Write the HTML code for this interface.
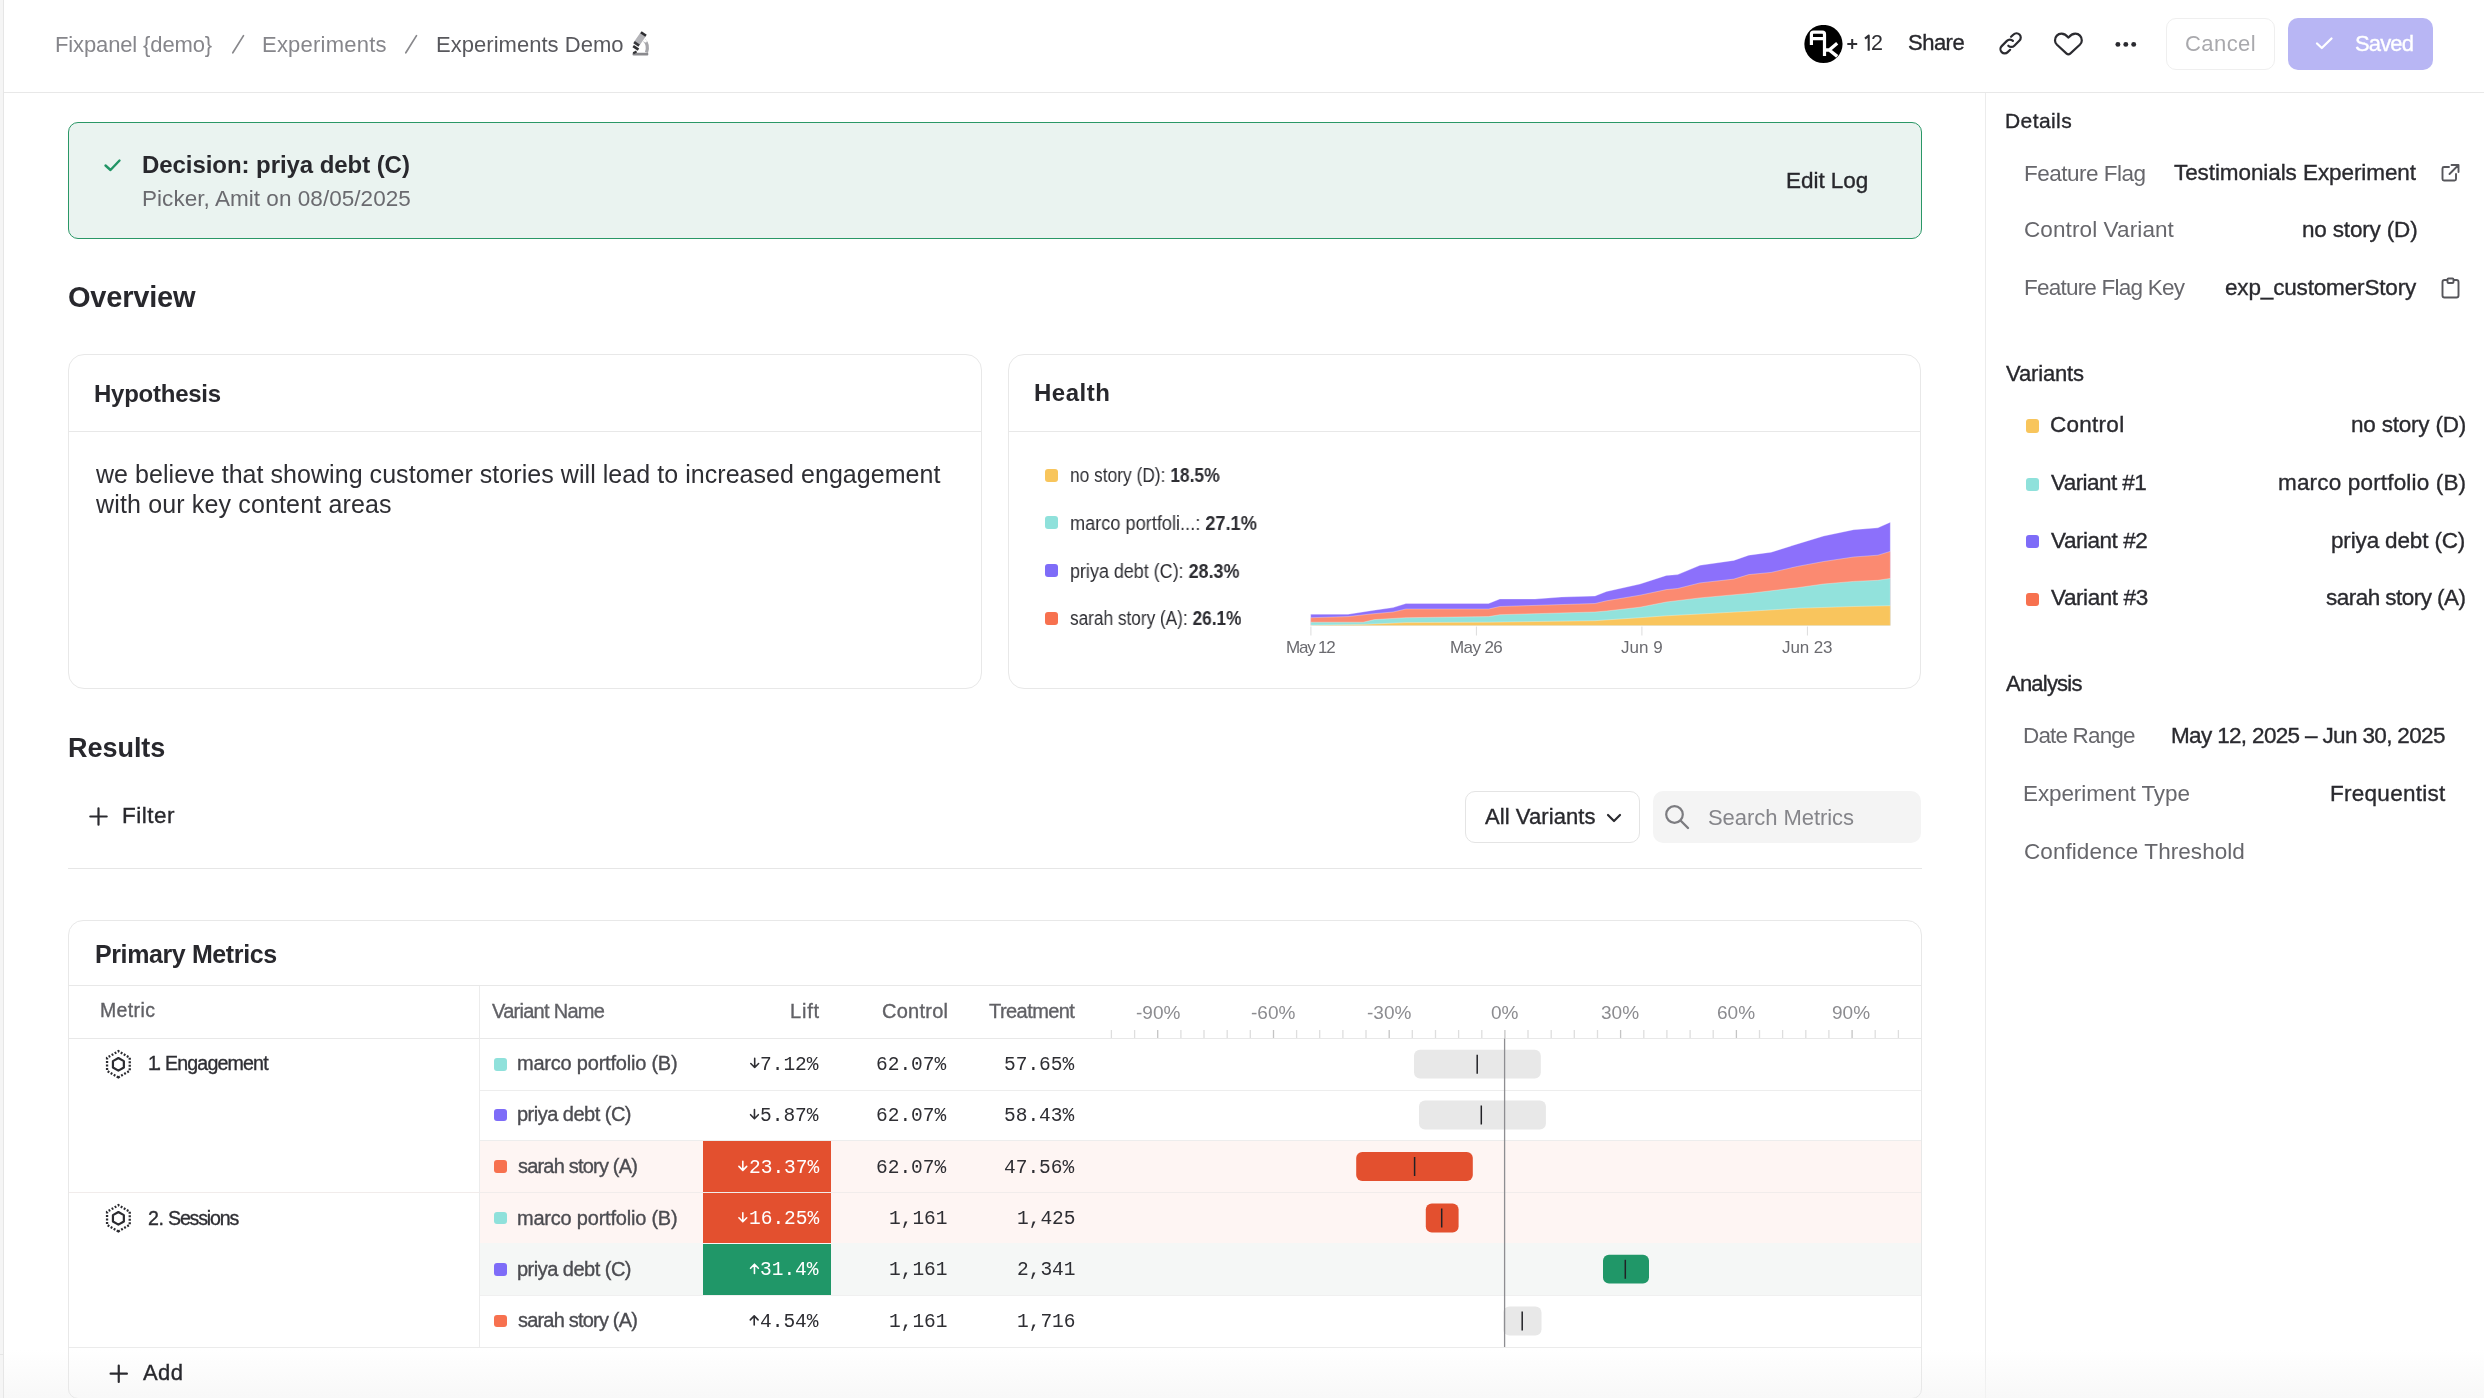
<!DOCTYPE html><html><head><meta charset="utf-8"><style>
html,body{margin:0;padding:0;background:#fff;width:2484px;height:1398px;overflow:hidden}
.t{position:absolute;white-space:pre;will-change:transform}
.b{position:absolute;display:block}
</style></head><body>
<div class="b" style="left:0px;top:0px;width:3px;height:1398px;background:#f5f5f5"></div>
<div class="b" style="left:3px;top:0px;width:1px;height:1398px;background:#e6e6e6"></div>
<div class="b" style="left:4px;top:92px;width:2480px;height:1px;background:#e8e8e8"></div>
<div class="b" style="left:1985px;top:93px;width:1px;height:1305px;background:#ececec"></div>
<div class="b" style="left:4px;top:1350px;width:2480px;height:48px;background:linear-gradient(rgba(250,250,250,0),rgba(245,245,245,0.7))"></div>
<div class="b" style="left:0px;top:1354px;width:3px;height:1px;background:#e6e6e6"></div>
<div class="t" style="left:55.25px;top:33.98px;font:400 22px/22px 'Liberation Sans', sans-serif;letter-spacing:-0.134px;color:#86868b;">Fixpanel {demo}</div>
<svg class="b" style="left:228px;top:32px" width="20" height="24" viewBox="0 0 20 24"><path d="M15.5 3.6 L4.8 20.8" stroke="#88888c" stroke-width="1.7" stroke-linecap="round"/></svg>
<div class="t" style="left:262.25px;top:33.98px;font:400 22px/22px 'Liberation Sans', sans-serif;letter-spacing:0.225px;color:#86868b;">Experiments</div>
<svg class="b" style="left:401px;top:32px" width="20" height="24" viewBox="0 0 20 24"><path d="M15.5 3.6 L4.8 20.8" stroke="#88888c" stroke-width="1.7" stroke-linecap="round"/></svg>
<div class="t" style="left:435.75px;top:33.98px;font:400 22px/22px 'Liberation Sans', sans-serif;letter-spacing:0.033px;color:#58585d;">Experiments Demo</div>
<svg class="b" style="left:1804px;top:24.9px" width="39" height="39" viewBox="0 0 39 39"><circle cx="19.45" cy="19" r="19.1" fill="#000"/><path d="M7.4 20.1 V9 Q7.4 7.1 9.5 7.1 H18.4 Q20.5 7.1 20.5 9.2 V31.1 M7.4 13.7 H20.5" fill="none" stroke="#fff" stroke-width="3.2"/><path d="M20.5 25 H25.2 L33.2 18.3 M25.2 25 L33.2 31.4" fill="none" stroke="#fff" stroke-width="3.3"/></svg>
<svg class="b" style="left:1846px;top:38px" width="13" height="12" viewBox="0 0 13 12"><path d="M6.2 1 V11 M1.3 6 H11.2" stroke="#2e2e33" stroke-width="2"/></svg>
<svg class="b" style="left:1862px;top:33px" width="10" height="20" viewBox="0 0 10 20"><path d="M6.7 17.8 V2.6 L3 5.6" fill="none" stroke="#2e2e33" stroke-width="2.1" stroke-linejoin="round"/></svg>
<div class="t" style="left:1870.83px;top:33.40px;font:400 21.5px/21.5px 'Liberation Sans', sans-serif;letter-spacing:0.000px;color:#2e2e33;">2</div>
<div class="t" style="left:1908.10px;top:32.43px;font:400 22px/22px 'Liberation Sans', sans-serif;letter-spacing:-0.512px;color:#28282d;-webkit-text-stroke:0.35px #28282d;">Share</div>
<svg class="b" style="left:1992px;top:26px" width="38" height="36" viewBox="0 0 38 36"><g fill="none" stroke="#2b2b30" stroke-width="2.2" stroke-linecap="round"><path d="M19.05 10.8 L21.5 8.5 A4.24 4.24 0 0 1 27.5 14.5 L22.3 19.7 A4.24 4.24 0 0 1 16.3 19.7"/><path d="M18.15 23.8 L15.7 26.1 A4.24 4.24 0 0 1 9.7 20.1 L14.9 14.9 A4.24 4.24 0 0 1 20.9 14.9"/></g></svg>
<svg class="b" style="left:2046px;top:26px" width="44" height="36" viewBox="0 0 44 36"><path d="M22.4 11.6 C20.5 9.3 18.3 7.7 15.4 7.7 C11.8 7.7 9 10.6 9 14.4 C9 16.3 9.8 17.6 11 18.8 L20.6 27.6 Q22.4 29.2 24.2 27.6 L33.8 18.8 C35 17.6 35.8 16.3 35.8 14.4 C35.8 10.6 33 7.7 29.4 7.7 C26.5 7.7 24.3 9.3 22.4 11.6 Z" fill="none" stroke="#2b2b30" stroke-width="2.2" stroke-linejoin="round"/></svg>
<svg class="b" style="left:2110px;top:38px" width="30" height="14" viewBox="0 0 30 14"><circle cx="7.9" cy="6.4" r="2.45" fill="#2b2b30"/><circle cx="15.8" cy="6.4" r="2.45" fill="#2b2b30"/><circle cx="23.7" cy="6.4" r="2.45" fill="#2b2b30"/></svg>
<div class="b" style="left:2165.5px;top:18px;width:109.5px;height:52px;border:1.5px solid #efefef;border-radius:10px;box-sizing:border-box"></div>
<div class="t" style="left:2184.57px;top:32.98px;font:400 22px/22px 'Liberation Sans', sans-serif;letter-spacing:0.425px;color:#a9a9ad;">Cancel</div>
<div class="b" style="left:2288px;top:18px;width:145px;height:52px;background:#b8b6f4;border-radius:10px"></div>
<svg class="b" style="left:2315px;top:36px" width="19" height="15" viewBox="0 0 19 15"><path d="M2 7.5 L6.8 12 L16.5 2.5" fill="none" stroke="#fff" stroke-width="2.3" stroke-linecap="round" stroke-linejoin="round"/></svg>
<div class="t" style="left:2355.00px;top:32.53px;font:400 22px/22px 'Liberation Sans', sans-serif;letter-spacing:-0.850px;color:#ffffff;-webkit-text-stroke:0.35px #ffffff;">Saved</div>
<svg class="b" style="left:624px;top:26px" width="36" height="36" viewBox="0 0 36 36"><rect x="12.8" y="6.8" width="6.6" height="12" rx="1.5" fill="#b3b3b7" transform="rotate(35 16 12.8)"/><rect x="13" y="5.6" width="6.2" height="2.6" fill="#2d2d31" transform="rotate(35 16 12.8)"/><rect x="13" y="17.6" width="6.2" height="2.6" fill="#38383c" transform="rotate(35 16 12.8)"/><path d="M20.5 14.5 Q25 19 22.5 26.5" stroke="#a6a6aa" stroke-width="3.2" fill="none"/><path d="M9.2 20.2 L14.5 23.6" stroke="#2e2e31" stroke-width="2.6"/><rect x="8.5" y="26.8" width="15.8" height="2.6" rx="1" fill="#8a8a8e"/><path d="M9.2 27.2 L12.6 25.6" stroke="#333336" stroke-width="2.2"/><circle cx="21.4" cy="14.9" r="1.5" fill="#fff"/></svg>
<div class="b" style="left:68px;top:122px;width:1854px;height:117px;background:#eaf3f0;border:1.5px solid #2a9766;border-radius:10px;box-sizing:border-box"></div>
<svg class="b" style="left:103px;top:157px" width="19" height="16" viewBox="0 0 19 16"><path d="M2.5 8.5 L7.5 13 L16.5 3.5" fill="none" stroke="#219465" stroke-width="2.4" stroke-linecap="round" stroke-linejoin="round"/></svg>
<div class="t" style="left:142.38px;top:152.98px;font:700 24px/24px 'Liberation Sans', sans-serif;letter-spacing:-0.065px;color:#28282d;">Decision: priya debt (C)</div>
<div class="t" style="left:142.12px;top:187.95px;font:400 22.5px/22.5px 'Liberation Sans', sans-serif;letter-spacing:0.045px;color:#6a6a6f;">Picker, Amit on 08/05/2025</div>
<div class="t" style="left:1786.12px;top:169.60px;font:400 22.5px/22.5px 'Liberation Sans', sans-serif;letter-spacing:-0.036px;color:#28282d;-webkit-text-stroke:0.35px #28282d;">Edit Log</div>
<div class="t" style="left:67.88px;top:283.05px;font:700 29px/29px 'Liberation Sans', sans-serif;letter-spacing:-0.196px;color:#28282d;">Overview</div>
<div class="b" style="left:68px;top:354px;width:914px;height:335px;border:1.5px solid #e8e8e8;border-radius:16px;box-sizing:border-box"></div>
<div class="b" style="left:69px;top:431px;width:912px;height:1px;background:#e8e8e8"></div>
<div class="t" style="left:94.17px;top:381.68px;font:700 24px/24px 'Liberation Sans', sans-serif;letter-spacing:-0.250px;color:#28282d;">Hypothesis</div>
<div class="t" style="left:96.30px;top:462.44px;font:400 25px/25px 'Liberation Sans', sans-serif;letter-spacing:0.051px;color:#2e2e33;">we believe that showing customer stories will lead to increased engagement</div>
<div class="t" style="left:96.30px;top:492.24px;font:400 25px/25px 'Liberation Sans', sans-serif;letter-spacing:0.148px;color:#2e2e33;">with our key content areas</div>
<div class="b" style="left:1008px;top:354px;width:913px;height:335px;border:1.5px solid #e8e8e8;border-radius:16px;box-sizing:border-box"></div>
<div class="b" style="left:1009px;top:431px;width:911px;height:1px;background:#e8e8e8"></div>
<div class="t" style="left:1033.88px;top:381.18px;font:700 24px/24px 'Liberation Sans', sans-serif;letter-spacing:0.525px;color:#28282d;">Health</div>
<div class="b" style="left:1045px;top:468.5px;width:13px;height:13.0px;background:#f8c55c;border-radius:3px"></div>
<div class="t" style="left:1069.8px;top:465.89px;font:400 19.5px/19.5px 'Liberation Sans';color:#2e2e33;transform-origin:0 0;transform:scaleX(0.8900)">no story (D): <b style="font-weight:700">18.5%</b></div>
<div class="b" style="left:1045px;top:516.3px;width:13px;height:13.0px;background:#8fe1db;border-radius:3px"></div>
<div class="t" style="left:1069.8px;top:513.69px;font:400 19.5px/19.5px 'Liberation Sans';color:#2e2e33;transform-origin:0 0;transform:scaleX(0.9317)">marco portfoli...: <b style="font-weight:700">27.1%</b></div>
<div class="b" style="left:1045px;top:564.2px;width:13px;height:13.0px;background:#7e6cf8;border-radius:3px"></div>
<div class="t" style="left:1069.8px;top:561.59px;font:400 19.5px/19.5px 'Liberation Sans';color:#2e2e33;transform-origin:0 0;transform:scaleX(0.9194)">priya debt (C): <b style="font-weight:700">28.3%</b></div>
<div class="b" style="left:1045px;top:612.1px;width:13px;height:13.0px;background:#f7714f;border-radius:3px"></div>
<div class="t" style="left:1069.8px;top:609.49px;font:400 19.5px/19.5px 'Liberation Sans';color:#2e2e33;transform-origin:0 0;transform:scaleX(0.8835)">sarah story (A): <b style="font-weight:700">26.1%</b></div>
<svg class="b" style="left:0;top:0" width="2484" height="700" viewBox="0 0 2484 700"><polygon points="1310.7,614.3 1348.0,614.3 1374.0,610.2 1393.0,607.6 1406.0,603.5 1488.6,603.5 1499.8,599.0 1535.0,599.0 1561.6,597.0 1595.0,596.0 1606.5,591.5 1640.0,584.0 1666.4,575.4 1677.7,574.6 1700.0,565.3 1733.8,560.4 1748.8,555.2 1771.2,552.2 1797.5,543.9 1823.7,536.0 1853.6,529.7 1877.9,527.8 1890.3,522.2 1890.3,625.6 1310.7,625.6" fill="#8c70fb" stroke="rgba(255,255,255,0.5)" stroke-width="0.6"/><polygon points="1310.7,617.7 1348.0,616.6 1370.6,614.0 1393.0,612.0 1406.0,609.0 1488.6,609.0 1499.8,606.5 1595.0,603.5 1606.5,600.8 1640.0,595.2 1666.4,589.6 1677.7,588.5 1700.0,582.9 1733.8,579.1 1748.8,574.6 1771.2,572.4 1797.5,566.4 1823.7,561.5 1853.6,557.0 1877.9,555.2 1890.3,551.4 1890.3,625.6 1310.7,625.6" fill="#fb8a71" stroke="rgba(255,255,255,0.5)" stroke-width="0.6"/><polygon points="1310.7,622.2 1363.2,622.2 1374.4,619.6 1406.0,617.7 1488.6,616.6 1499.8,614.7 1595.0,612.0 1606.5,611.0 1640.0,607.2 1666.4,602.0 1700.0,597.9 1748.8,593.4 1797.5,587.7 1823.7,584.0 1853.6,581.4 1877.9,580.3 1890.3,578.4 1890.3,625.6 1310.7,625.6" fill="#92e2dc" stroke="rgba(255,255,255,0.5)" stroke-width="0.6"/><polygon points="1310.7,625.2 1363.2,624.4 1406.0,622.6 1488.6,622.2 1595.0,620.7 1640.0,617.7 1666.4,615.8 1700.0,614.0 1748.8,611.3 1797.5,608.3 1853.6,606.5 1890.3,605.7 1890.3,625.6 1310.7,625.6" fill="#f9c55d" stroke="rgba(255,255,255,0.5)" stroke-width="0.6"/><line x1="1310.9" y1="626.5" x2="1310.9" y2="635.5" stroke="#dcdcdc" stroke-width="1"/><line x1="1476.4" y1="626.5" x2="1476.4" y2="635.5" stroke="#dcdcdc" stroke-width="1"/><line x1="1641.9" y1="626.5" x2="1641.9" y2="635.5" stroke="#dcdcdc" stroke-width="1"/><line x1="1807.4" y1="626.5" x2="1807.4" y2="635.5" stroke="#dcdcdc" stroke-width="1"/></svg>
<div class="t" style="left:1286.17px;top:639.21px;font:400 17px/17px 'Liberation Sans', sans-serif;letter-spacing:-1.200px;color:#6b6b70;">May 12</div>
<div class="t" style="left:1449.58px;top:639.21px;font:400 17px/17px 'Liberation Sans', sans-serif;letter-spacing:-0.585px;color:#6b6b70;">May 26</div>
<div class="t" style="left:1621.30px;top:639.21px;font:400 17px/17px 'Liberation Sans', sans-serif;letter-spacing:0.000px;color:#6b6b70;">Jun 9</div>
<div class="t" style="left:1782.30px;top:639.21px;font:400 17px/17px 'Liberation Sans', sans-serif;letter-spacing:-0.125px;color:#6b6b70;">Jun 23</div>
<div class="t" style="left:67.95px;top:734.94px;font:700 27px/27px 'Liberation Sans', sans-serif;letter-spacing:-0.037px;color:#28282d;">Results</div>
<svg class="b" style="left:88px;top:806px" width="21" height="21" viewBox="0 0 21 21"><path d="M10.5 2.3 V18.7 M2.3 10.5 H18.7" stroke="#2b2b30" stroke-width="2.2" stroke-linecap="round"/></svg>
<div class="t" style="left:122.12px;top:805.20px;font:400 22.5px/22.5px 'Liberation Sans', sans-serif;letter-spacing:0.490px;color:#28282d;-webkit-text-stroke:0.35px #28282d;">Filter</div>
<div class="b" style="left:1465px;top:791px;width:175px;height:52px;border:1.5px solid #e4e4e4;border-radius:10px;box-sizing:border-box"></div>
<div class="t" style="left:1485.30px;top:805.53px;font:400 22px/22px 'Liberation Sans', sans-serif;letter-spacing:0.075px;color:#28282d;-webkit-text-stroke:0.35px #28282d;">All Variants</div>
<svg class="b" style="left:1606px;top:812px" width="16" height="12" viewBox="0 0 16 12"><path d="M2 3 L8 9 L14 3" fill="none" stroke="#2b2b30" stroke-width="2.2" stroke-linecap="round" stroke-linejoin="round"/></svg>
<div class="b" style="left:1653px;top:791px;width:268px;height:52px;background:#f4f4f4;border-radius:10px"></div>
<svg class="b" style="left:1664px;top:804px" width="27" height="26" viewBox="0 0 27 26"><circle cx="10.5" cy="10.5" r="8.3" fill="none" stroke="#7c7c80" stroke-width="2.2"/><path d="M16.5 16.5 L24 24" stroke="#7c7c80" stroke-width="2.4" stroke-linecap="round"/></svg>
<div class="t" style="left:1707.70px;top:806.78px;font:400 22px/22px 'Liberation Sans', sans-serif;letter-spacing:-0.054px;color:#85858a;">Search Metrics</div>
<div class="b" style="left:68px;top:868px;width:1854px;height:1px;background:#e6e6e6"></div>
<div class="b" style="left:68px;top:920px;width:1854px;height:479px;border:1.5px solid #e8e8e8;border-radius:15px 15px 10px 10px;box-sizing:border-box"></div>
<div class="t" style="left:94.67px;top:941.74px;font:700 25px/25px 'Liberation Sans', sans-serif;letter-spacing:-0.393px;color:#28282d;">Primary Metrics</div>
<div class="b" style="left:69px;top:985px;width:1852px;height:1px;background:#e8e8e8"></div>
<div class="t" style="left:100.38px;top:1001.44px;font:400 19.5px/19.5px 'Liberation Sans', sans-serif;letter-spacing:0.360px;color:#616166;-webkit-text-stroke:0.35px #616166;">Metric</div>
<div class="t" style="left:492.48px;top:1001.42px;font:400 20px/20px 'Liberation Sans', sans-serif;letter-spacing:-0.723px;color:#616166;-webkit-text-stroke:0.35px #616166;">Variant Name</div>
<div class="t" style="left:789.88px;top:1001.42px;font:400 20px/20px 'Liberation Sans', sans-serif;letter-spacing:0.808px;color:#616166;-webkit-text-stroke:0.35px #616166;">Lift</div>
<div class="t" style="left:881.80px;top:1001.42px;font:400 20px/20px 'Liberation Sans', sans-serif;letter-spacing:0.246px;color:#616166;-webkit-text-stroke:0.35px #616166;">Control</div>
<div class="t" style="left:988.63px;top:1001.42px;font:400 20px/20px 'Liberation Sans', sans-serif;letter-spacing:-0.559px;color:#616166;-webkit-text-stroke:0.35px #616166;">Treatment</div>
<div class="t" style="left:1136.09px;top:1002.52px;font:400 19px/19px 'Liberation Sans', sans-serif;letter-spacing:0.000px;color:#8c8c90;">-90%</div>
<div class="t" style="left:1251.39px;top:1002.52px;font:400 19px/19px 'Liberation Sans', sans-serif;letter-spacing:0.000px;color:#8c8c90;">-60%</div>
<div class="t" style="left:1366.99px;top:1002.52px;font:400 19px/19px 'Liberation Sans', sans-serif;letter-spacing:0.000px;color:#8c8c90;">-30%</div>
<div class="t" style="left:1491.19px;top:1002.52px;font:400 19px/19px 'Liberation Sans', sans-serif;letter-spacing:0.000px;color:#8c8c90;">0%</div>
<div class="t" style="left:1601.24px;top:1002.52px;font:400 19px/19px 'Liberation Sans', sans-serif;letter-spacing:0.000px;color:#8c8c90;">30%</div>
<div class="t" style="left:1716.71px;top:1002.52px;font:400 19px/19px 'Liberation Sans', sans-serif;letter-spacing:0.000px;color:#8c8c90;">60%</div>
<div class="t" style="left:1832.47px;top:1002.52px;font:400 19px/19px 'Liberation Sans', sans-serif;letter-spacing:0.000px;color:#8c8c90;">90%</div>
<svg class="b" style="left:0;top:0" width="2484" height="1398"><line x1="1111.4" y1="1030" x2="1111.4" y2="1038" stroke="#dedede" stroke-width="1.3"/><line x1="1134.6" y1="1030" x2="1134.6" y2="1038" stroke="#dedede" stroke-width="1.3"/><line x1="1157.7" y1="1030" x2="1157.7" y2="1038" stroke="#c4c4c4" stroke-width="1.3"/><line x1="1180.9" y1="1030" x2="1180.9" y2="1038" stroke="#dedede" stroke-width="1.3"/><line x1="1204.0" y1="1030" x2="1204.0" y2="1038" stroke="#dedede" stroke-width="1.3"/><line x1="1227.2" y1="1030" x2="1227.2" y2="1038" stroke="#dedede" stroke-width="1.3"/><line x1="1250.3" y1="1030" x2="1250.3" y2="1038" stroke="#dedede" stroke-width="1.3"/><line x1="1273.5" y1="1030" x2="1273.5" y2="1038" stroke="#c4c4c4" stroke-width="1.3"/><line x1="1296.6" y1="1030" x2="1296.6" y2="1038" stroke="#dedede" stroke-width="1.3"/><line x1="1319.7" y1="1030" x2="1319.7" y2="1038" stroke="#dedede" stroke-width="1.3"/><line x1="1342.9" y1="1030" x2="1342.9" y2="1038" stroke="#dedede" stroke-width="1.3"/><line x1="1366.0" y1="1030" x2="1366.0" y2="1038" stroke="#dedede" stroke-width="1.3"/><line x1="1389.2" y1="1030" x2="1389.2" y2="1038" stroke="#c4c4c4" stroke-width="1.3"/><line x1="1412.3" y1="1030" x2="1412.3" y2="1038" stroke="#dedede" stroke-width="1.3"/><line x1="1435.5" y1="1030" x2="1435.5" y2="1038" stroke="#dedede" stroke-width="1.3"/><line x1="1458.6" y1="1030" x2="1458.6" y2="1038" stroke="#dedede" stroke-width="1.3"/><line x1="1481.8" y1="1030" x2="1481.8" y2="1038" stroke="#dedede" stroke-width="1.3"/><line x1="1504.9" y1="1030" x2="1504.9" y2="1038" stroke="#c4c4c4" stroke-width="1.3"/><line x1="1528.0" y1="1030" x2="1528.0" y2="1038" stroke="#dedede" stroke-width="1.3"/><line x1="1551.2" y1="1030" x2="1551.2" y2="1038" stroke="#dedede" stroke-width="1.3"/><line x1="1574.3" y1="1030" x2="1574.3" y2="1038" stroke="#dedede" stroke-width="1.3"/><line x1="1597.5" y1="1030" x2="1597.5" y2="1038" stroke="#dedede" stroke-width="1.3"/><line x1="1620.6" y1="1030" x2="1620.6" y2="1038" stroke="#c4c4c4" stroke-width="1.3"/><line x1="1643.8" y1="1030" x2="1643.8" y2="1038" stroke="#dedede" stroke-width="1.3"/><line x1="1666.9" y1="1030" x2="1666.9" y2="1038" stroke="#dedede" stroke-width="1.3"/><line x1="1690.1" y1="1030" x2="1690.1" y2="1038" stroke="#dedede" stroke-width="1.3"/><line x1="1713.2" y1="1030" x2="1713.2" y2="1038" stroke="#dedede" stroke-width="1.3"/><line x1="1736.4" y1="1030" x2="1736.4" y2="1038" stroke="#c4c4c4" stroke-width="1.3"/><line x1="1759.5" y1="1030" x2="1759.5" y2="1038" stroke="#dedede" stroke-width="1.3"/><line x1="1782.6" y1="1030" x2="1782.6" y2="1038" stroke="#dedede" stroke-width="1.3"/><line x1="1805.8" y1="1030" x2="1805.8" y2="1038" stroke="#dedede" stroke-width="1.3"/><line x1="1828.9" y1="1030" x2="1828.9" y2="1038" stroke="#dedede" stroke-width="1.3"/><line x1="1852.1" y1="1030" x2="1852.1" y2="1038" stroke="#c4c4c4" stroke-width="1.3"/><line x1="1875.2" y1="1030" x2="1875.2" y2="1038" stroke="#dedede" stroke-width="1.3"/><line x1="1898.4" y1="1030" x2="1898.4" y2="1038" stroke="#dedede" stroke-width="1.3"/></svg>
<div class="b" style="left:69px;top:1038px;width:1852px;height:1px;background:#e8e8e8"></div>
<div class="b" style="left:480px;top:1140.5px;width:1441px;height:102.5px;background:#fef5f3"></div>
<div class="b" style="left:480px;top:1243px;width:1441px;height:52px;background:#f5f7f6"></div>
<div class="b" style="left:480px;top:1089.5px;width:1441px;height:1.0px;background:#ededed"></div>
<div class="b" style="left:480px;top:1140px;width:1441px;height:1px;background:#ededed"></div>
<div class="b" style="left:69px;top:1192px;width:1852px;height:1px;background:#f1eceb"></div>
<div class="b" style="left:480px;top:1294.5px;width:1441px;height:1.0px;background:#f0f0f0"></div>
<div class="b" style="left:69px;top:1347px;width:1852px;height:1px;background:#ebebeb"></div>
<div class="b" style="left:479px;top:986px;width:1px;height:361px;background:#ececec"></div>
<svg class="b" style="left:0;top:0" width="2484" height="1398"><polygon points="118.40,1077.40 107.06,1070.85 107.06,1057.75 118.40,1051.20 129.74,1057.75 129.74,1070.85" fill="none" stroke="#2b2b30" stroke-width="2.3" stroke-dasharray="1.9 1.6"/><polygon points="118.40,1070.60 112.94,1067.45 112.94,1061.15 118.40,1058.00 123.86,1061.15 123.86,1067.45" fill="none" stroke="#2b2b30" stroke-width="2.2" stroke-linejoin="round"/><polygon points="118.40,1231.40 107.06,1224.85 107.06,1211.75 118.40,1205.20 129.74,1211.75 129.74,1224.85" fill="none" stroke="#2b2b30" stroke-width="2.3" stroke-dasharray="1.9 1.6"/><polygon points="118.40,1224.60 112.94,1221.45 112.94,1215.15 118.40,1212.00 123.86,1215.15 123.86,1221.45" fill="none" stroke="#2b2b30" stroke-width="2.2" stroke-linejoin="round"/></svg>
<div class="t" style="left:148.20px;top:1053.76px;font:400 19.6px/19.6px 'Liberation Sans', sans-serif;letter-spacing:-2.700px;color:#2e2e33;-webkit-text-stroke:0.35px #2e2e33;">1.</div>
<div class="t" style="left:165.07px;top:1053.76px;font:400 19.6px/19.6px 'Liberation Sans', sans-serif;letter-spacing:-0.836px;color:#2e2e33;-webkit-text-stroke:0.35px #2e2e33;">Engagement</div>
<div class="t" style="left:148.30px;top:1208.56px;font:400 19.6px/19.6px 'Liberation Sans', sans-serif;letter-spacing:-0.300px;color:#2e2e33;-webkit-text-stroke:0.35px #2e2e33;">2.</div>
<div class="t" style="left:167.82px;top:1208.56px;font:400 19.6px/19.6px 'Liberation Sans', sans-serif;letter-spacing:-1.175px;color:#2e2e33;-webkit-text-stroke:0.35px #2e2e33;">Sessions</div>
<div class="b" style="left:494.2px;top:1057.85px;width:12.800000000000011px;height:12.800000000000182px;background:#8fe1db;border-radius:3px"></div>
<div class="t" style="left:517.33px;top:1053.22px;font:400 20px/20px 'Liberation Sans', sans-serif;letter-spacing:-0.215px;color:#4c4c51;-webkit-text-stroke:0.35px #4c4c51;">marco portfolio (B)</div>
<div class="t" style="left:760.30px;top:1055.65px;font:400 19.5px/19.5px 'Liberation Mono', monospace;letter-spacing:0.000px;color:#2e2e33;">7.12%</div>
<div class="t" style="left:876.25px;top:1055.65px;font:400 19.5px/19.5px 'Liberation Mono', monospace;letter-spacing:0.000px;color:#2e2e33;">62.07%</div>
<div class="t" style="left:1004.15px;top:1055.65px;font:400 19.5px/19.5px 'Liberation Mono', monospace;letter-spacing:0.000px;color:#2e2e33;">57.65%</div>
<div class="b" style="left:494.2px;top:1108.6px;width:12.800000000000011px;height:12.800000000000182px;background:#7e6cf8;border-radius:3px"></div>
<div class="t" style="left:517.45px;top:1104.42px;font:400 20px/20px 'Liberation Sans', sans-serif;letter-spacing:-0.510px;color:#4c4c51;-webkit-text-stroke:0.35px #4c4c51;">priya debt (C)</div>
<div class="t" style="left:760.30px;top:1106.85px;font:400 19.5px/19.5px 'Liberation Mono', monospace;letter-spacing:0.000px;color:#2e2e33;">5.87%</div>
<div class="t" style="left:876.25px;top:1106.85px;font:400 19.5px/19.5px 'Liberation Mono', monospace;letter-spacing:0.000px;color:#2e2e33;">62.07%</div>
<div class="t" style="left:1004.15px;top:1106.85px;font:400 19.5px/19.5px 'Liberation Mono', monospace;letter-spacing:0.000px;color:#2e2e33;">58.43%</div>
<div class="b" style="left:494.2px;top:1160.1px;width:12.800000000000011px;height:12.800000000000182px;background:#f7714f;border-radius:3px"></div>
<div class="t" style="left:518.08px;top:1156.12px;font:400 20px/20px 'Liberation Sans', sans-serif;letter-spacing:-0.804px;color:#4c4c51;-webkit-text-stroke:0.35px #4c4c51;">sarah story (A)</div>
<div class="b" style="left:703px;top:1141px;width:128px;height:50.700000000000045px;background:#e3502f"></div>
<div class="t" style="left:748.55px;top:1158.55px;font:400 19.5px/19.5px 'Liberation Mono', monospace;letter-spacing:0.000px;color:#ffffff;">23.37%</div>
<div class="t" style="left:876.25px;top:1158.55px;font:400 19.5px/19.5px 'Liberation Mono', monospace;letter-spacing:0.000px;color:#2e2e33;">62.07%</div>
<div class="t" style="left:1004.15px;top:1158.55px;font:400 19.5px/19.5px 'Liberation Mono', monospace;letter-spacing:0.000px;color:#2e2e33;">47.56%</div>
<div class="b" style="left:494.2px;top:1211.6px;width:12.800000000000011px;height:12.800000000000182px;background:#8fe1db;border-radius:3px"></div>
<div class="t" style="left:517.33px;top:1207.52px;font:400 20px/20px 'Liberation Sans', sans-serif;letter-spacing:-0.215px;color:#4c4c51;-webkit-text-stroke:0.35px #4c4c51;">marco portfolio (B)</div>
<div class="b" style="left:703px;top:1193.2px;width:128px;height:50.200000000000045px;background:#e3502f"></div>
<div class="t" style="left:748.55px;top:1209.95px;font:400 19.5px/19.5px 'Liberation Mono', monospace;letter-spacing:0.000px;color:#ffffff;">16.25%</div>
<div class="t" style="left:889.00px;top:1209.95px;font:400 19.5px/19.5px 'Liberation Mono', monospace;letter-spacing:0.000px;color:#2e2e33;">1,161</div>
<div class="t" style="left:1017.15px;top:1209.95px;font:400 19.5px/19.5px 'Liberation Mono', monospace;letter-spacing:0.000px;color:#2e2e33;">1,425</div>
<div class="b" style="left:494.2px;top:1262.85px;width:12.800000000000011px;height:12.800000000000182px;background:#7e6cf8;border-radius:3px"></div>
<div class="t" style="left:517.45px;top:1258.82px;font:400 20px/20px 'Liberation Sans', sans-serif;letter-spacing:-0.510px;color:#4c4c51;-webkit-text-stroke:0.35px #4c4c51;">priya debt (C)</div>
<div class="b" style="left:703px;top:1243.8px;width:128px;height:51.0px;background:#209768"></div>
<div class="t" style="left:760.30px;top:1261.25px;font:400 19.5px/19.5px 'Liberation Mono', monospace;letter-spacing:0.000px;color:#ffffff;">31.4%</div>
<div class="t" style="left:889.00px;top:1261.25px;font:400 19.5px/19.5px 'Liberation Mono', monospace;letter-spacing:0.000px;color:#2e2e33;">1,161</div>
<div class="t" style="left:1016.90px;top:1261.25px;font:400 19.5px/19.5px 'Liberation Mono', monospace;letter-spacing:0.000px;color:#2e2e33;">2,341</div>
<div class="b" style="left:494.2px;top:1314.6px;width:12.800000000000011px;height:12.800000000000182px;background:#f7714f;border-radius:3px"></div>
<div class="t" style="left:518.08px;top:1310.42px;font:400 20px/20px 'Liberation Sans', sans-serif;letter-spacing:-0.804px;color:#4c4c51;-webkit-text-stroke:0.35px #4c4c51;">sarah story (A)</div>
<div class="t" style="left:760.30px;top:1312.85px;font:400 19.5px/19.5px 'Liberation Mono', monospace;letter-spacing:0.000px;color:#2e2e33;">4.54%</div>
<div class="t" style="left:889.00px;top:1312.85px;font:400 19.5px/19.5px 'Liberation Mono', monospace;letter-spacing:0.000px;color:#2e2e33;">1,161</div>
<div class="t" style="left:1017.15px;top:1312.85px;font:400 19.5px/19.5px 'Liberation Mono', monospace;letter-spacing:0.000px;color:#2e2e33;">1,716</div>
<svg class="b" style="left:0;top:0" width="2484" height="1398"><path d="M754.70 1058.40 V1067.40 M750.80 1063.50 L754.70 1067.50 L758.60 1063.50" fill="none" stroke="#2e2e33" stroke-width="1.6" stroke-linecap="round" stroke-linejoin="round"/><rect x="1414" y="1049.8" width="126.8" height="28.8" rx="6" fill="#e8e8e8"/><line x1="1477.2" y1="1054.8" x2="1477.2" y2="1073.8" stroke="#222226" stroke-width="1.5"/><path d="M754.45 1109.60 V1118.60 M750.55 1114.70 L754.45 1118.70 L758.35 1114.70" fill="none" stroke="#2e2e33" stroke-width="1.6" stroke-linecap="round" stroke-linejoin="round"/><rect x="1419" y="1100.6" width="126.9" height="28.8" rx="6" fill="#e8e8e8"/><line x1="1481.3" y1="1105.5" x2="1481.3" y2="1124.5" stroke="#222226" stroke-width="1.5"/><path d="M742.82 1161.30 V1170.30 M738.92 1166.40 L742.82 1170.40 L746.72 1166.40" fill="none" stroke="#ffffff" stroke-width="1.6" stroke-linecap="round" stroke-linejoin="round"/><rect x="1356.2" y="1152.1" width="116.6" height="28.8" rx="6" fill="#e3502f"/><line x1="1414.6" y1="1157.0" x2="1414.6" y2="1176.0" stroke="#222226" stroke-width="1.5"/><path d="M742.82 1212.70 V1221.70 M738.92 1217.80 L742.82 1221.80 L746.72 1217.80" fill="none" stroke="#ffffff" stroke-width="1.6" stroke-linecap="round" stroke-linejoin="round"/><rect x="1425.8" y="1203.6" width="32.8" height="28.8" rx="6" fill="#e3502f"/><line x1="1441.7" y1="1208.5" x2="1441.7" y2="1227.5" stroke="#222226" stroke-width="1.5"/><path d="M754.45 1273.40 V1264.40 M750.55 1268.30 L754.45 1264.30 L758.35 1268.30" fill="none" stroke="#ffffff" stroke-width="1.6" stroke-linecap="round" stroke-linejoin="round"/><rect x="1603" y="1254.8" width="46.0" height="28.8" rx="6" fill="#209768"/><line x1="1625.3" y1="1259.8" x2="1625.3" y2="1278.8" stroke="#222226" stroke-width="1.5"/><path d="M754.20 1325.00 V1316.00 M750.30 1319.90 L754.20 1315.90 L758.10 1319.90" fill="none" stroke="#2e2e33" stroke-width="1.6" stroke-linecap="round" stroke-linejoin="round"/><rect x="1503.3" y="1306.6" width="38.2" height="28.8" rx="6" fill="#e8e8e8"/><line x1="1522.2" y1="1311.5" x2="1522.2" y2="1330.5" stroke="#222226" stroke-width="1.5"/><line x1="1504.6" y1="1038.5" x2="1504.6" y2="1347" stroke="#8e8e92" stroke-width="1.3"/></svg>
<svg class="b" style="left:108px;top:1363px" width="22" height="22" viewBox="0 0 22 22"><path d="M10.75 2.5 V18.9 M2.6 10.7 H18.9" stroke="#2b2b30" stroke-width="2.2" stroke-linecap="round"/></svg>
<div class="t" style="left:143.00px;top:1362.33px;font:400 22px/22px 'Liberation Sans', sans-serif;letter-spacing:0.425px;color:#28282d;-webkit-text-stroke:0.35px #28282d;">Add</div>
<div class="t" style="left:2004.55px;top:109.97px;font:400 21px/21px 'Liberation Sans', sans-serif;letter-spacing:0.408px;color:#28282d;-webkit-text-stroke:0.35px #28282d;">Details</div>
<div class="t" style="left:2023.53px;top:162.65px;font:400 22.5px/22.5px 'Liberation Sans', sans-serif;letter-spacing:-0.505px;color:#67676c;">Feature Flag</div>
<div class="t" style="left:2174.10px;top:162.20px;font:400 22.5px/22.5px 'Liberation Sans', sans-serif;letter-spacing:-0.084px;color:#2a2a2f;-webkit-text-stroke:0.35px #2a2a2f;">Testimonials Experiment</div>
<svg class="b" style="left:2440px;top:163px" width="21" height="20" viewBox="0 0 21 20"><g fill="none" stroke="#56565b" stroke-width="1.9" stroke-linecap="round" stroke-linejoin="round"><path d="M9 4 H4 Q2.5 4 2.5 5.5 V16 Q2.5 17.5 4 17.5 H14.5 Q16 17.5 16 16 V11"/><path d="M11.5 2 H18.5 V9 M18.5 2 L9.5 11"/></g></svg>
<div class="t" style="left:2024.28px;top:219.15px;font:400 22.5px/22.5px 'Liberation Sans', sans-serif;letter-spacing:0.105px;color:#67676c;">Control Variant</div>
<div class="t" style="left:2301.70px;top:218.70px;font:400 22.5px/22.5px 'Liberation Sans', sans-serif;letter-spacing:-0.166px;color:#2a2a2f;-webkit-text-stroke:0.35px #2a2a2f;">no story (D)</div>
<div class="t" style="left:2023.53px;top:277.45px;font:400 22.5px/22.5px 'Liberation Sans', sans-serif;letter-spacing:-0.777px;color:#67676c;">Feature Flag Key</div>
<div class="t" style="left:2224.70px;top:277.00px;font:400 22.5px/22.5px 'Liberation Sans', sans-serif;letter-spacing:-0.161px;color:#2a2a2f;-webkit-text-stroke:0.35px #2a2a2f;">exp_customerStory</div>
<svg class="b" style="left:2440px;top:277px" width="21" height="22" viewBox="0 0 21 22"><g fill="none" stroke="#56565b" stroke-width="1.9" stroke-linejoin="round"><rect x="2.5" y="3" width="16" height="17.5" rx="2"/><rect x="7.5" y="1.5" width="6" height="4.5" rx="1" fill="#fff"/></g></svg>
<div class="t" style="left:2005.67px;top:362.63px;font:400 22px/22px 'Liberation Sans', sans-serif;letter-spacing:-0.150px;color:#28282d;-webkit-text-stroke:0.35px #28282d;">Variants</div>
<div class="b" style="left:2025.8px;top:419.4px;width:13.400000000000091px;height:13.199999999999989px;background:#f8c55c;border-radius:3px"></div>
<div class="t" style="left:2049.57px;top:414.30px;font:400 22.5px/22.5px 'Liberation Sans', sans-serif;letter-spacing:0.271px;color:#2a2a2f;-webkit-text-stroke:0.35px #2a2a2f;">Control</div>
<div class="t" style="left:2350.50px;top:414.30px;font:400 22.5px/22.5px 'Liberation Sans', sans-serif;letter-spacing:-0.211px;color:#2a2a2f;-webkit-text-stroke:0.35px #2a2a2f;">no story (D)</div>
<div class="b" style="left:2025.8px;top:477.5px;width:13.400000000000091px;height:13.199999999999989px;background:#8fe1db;border-radius:3px"></div>
<div class="t" style="left:2050.57px;top:472.40px;font:400 22.5px/22.5px 'Liberation Sans', sans-serif;letter-spacing:-0.581px;color:#2a2a2f;-webkit-text-stroke:0.35px #2a2a2f;">Variant #1</div>
<div class="t" style="left:2277.50px;top:472.40px;font:400 22.5px/22.5px 'Liberation Sans', sans-serif;letter-spacing:0.169px;color:#2a2a2f;-webkit-text-stroke:0.35px #2a2a2f;">marco portfolio (B)</div>
<div class="b" style="left:2025.8px;top:534.7px;width:13.400000000000091px;height:13.199999999999932px;background:#7e6cf8;border-radius:3px"></div>
<div class="t" style="left:2050.57px;top:529.60px;font:400 22.5px/22.5px 'Liberation Sans', sans-serif;letter-spacing:-0.458px;color:#2a2a2f;-webkit-text-stroke:0.35px #2a2a2f;">Variant #2</div>
<div class="t" style="left:2331.40px;top:529.60px;font:400 22.5px/22.5px 'Liberation Sans', sans-serif;letter-spacing:-0.152px;color:#2a2a2f;-webkit-text-stroke:0.35px #2a2a2f;">priya debt (C)</div>
<div class="b" style="left:2025.8px;top:592.5px;width:13.400000000000091px;height:13.199999999999932px;background:#f7714f;border-radius:3px"></div>
<div class="t" style="left:2050.57px;top:587.40px;font:400 22.5px/22.5px 'Liberation Sans', sans-serif;letter-spacing:-0.417px;color:#2a2a2f;-webkit-text-stroke:0.35px #2a2a2f;">Variant #3</div>
<div class="t" style="left:2325.68px;top:587.40px;font:400 22.5px/22.5px 'Liberation Sans', sans-serif;letter-spacing:-0.536px;color:#2a2a2f;-webkit-text-stroke:0.35px #2a2a2f;">sarah story (A)</div>
<div class="t" style="left:2005.80px;top:672.83px;font:400 22px/22px 'Liberation Sans', sans-serif;letter-spacing:-0.789px;color:#28282d;-webkit-text-stroke:0.35px #28282d;">Analysis</div>
<div class="t" style="left:2023.12px;top:725.45px;font:400 22.5px/22.5px 'Liberation Sans', sans-serif;letter-spacing:-0.839px;color:#67676c;">Date Range</div>
<div class="t" style="left:2171.43px;top:725.00px;font:400 22.5px/22.5px 'Liberation Sans', sans-serif;letter-spacing:-0.656px;color:#2a2a2f;-webkit-text-stroke:0.35px #2a2a2f;">May 12, 2025 – Jun 30, 2025</div>
<div class="t" style="left:2023.12px;top:783.05px;font:400 22.5px/22.5px 'Liberation Sans', sans-serif;letter-spacing:-0.107px;color:#67676c;">Experiment Type</div>
<div class="t" style="left:2329.93px;top:782.60px;font:400 22.5px/22.5px 'Liberation Sans', sans-serif;letter-spacing:0.270px;color:#2a2a2f;-webkit-text-stroke:0.35px #2a2a2f;">Frequentist</div>
<div class="t" style="left:2023.88px;top:840.55px;font:400 22.5px/22.5px 'Liberation Sans', sans-serif;letter-spacing:0.061px;color:#67676c;">Confidence Threshold</div>
</body></html>
